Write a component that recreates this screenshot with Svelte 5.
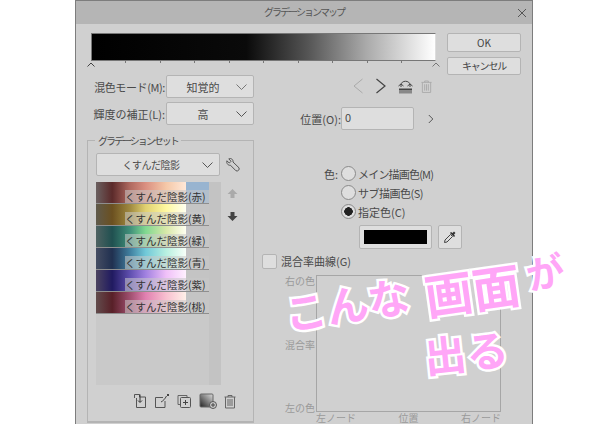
<script>
  const sets = [
    { name: 'くすんだ陰影(赤)', cls: 'red' },
    { name: 'くすんだ陰影(黄)', cls: 'yellow' },
    { name: 'くすんだ陰影(緑)', cls: 'green' },
    { name: 'くすんだ陰影(青)', cls: 'blue' },
    { name: 'くすんだ陰影(紫)', cls: 'purple' },
    { name: 'くすんだ陰影(桃)', cls: 'peach' }
  ];
  const ticks = [1, 2, 3, 4, 5, 6, 7, 8, 9];
</script>

<div class="dialog">
  <div class="titlebar">
    <span>グラデーションマップ</span>
    <svg class="close" width="10" height="10" viewBox="0 0 10 10"><path d="M1 1l8 8M9 1l-8 8" stroke="#555" fill="none" /></svg>
  </div>

  <div class="top">
    <div class="barwrap">
      <div class="bar"></div>
      <div class="ticks">
        {#each ticks as t}
          <i></i>
        {/each}
      </div>
      <svg class="caret start" width="8" height="5" viewBox="0 0 8 5"><path d="M.5 4.500L4 1l3.500 3.500" stroke="#444" fill="none" /></svg>
      <svg class="caret end" width="8" height="5" viewBox="0 0 8 5"><path d="M.5 4.500L4 1l3.500 3.500" stroke="#777" fill="none" /></svg>
    </div>
    <div class="buttons">
      <button>OK</button>
      <button class="cancel">キャンセル</button>
    </div>
  </div>

  <div class="columns">
    <div class="col-left">
      <div class="field">
        <span class="label tight">混色モード(M):</span>
        <div class="select">知覚的<svg width="11" height="6" viewBox="0 0 11 6"><path d="M.5.500l5 5 5-5" stroke="#777" fill="none" /></svg></div>
      </div>
      <div class="field">
        <span class="label">輝度の補正(L):</span>
        <div class="select">高<svg width="11" height="6" viewBox="0 0 11 6"><path d="M.5.500l5 5 5-5" stroke="#555" fill="none" /></svg></div>
      </div>

      <div class="group">
        <span class="legend">グラデーションセット</span>
        <div class="setrow">
          <div class="select wide"><span class="settext">くすんだ陰影</span><svg width="11" height="6" viewBox="0 0 11 6"><path d="M.5.500l5 5 5-5" stroke="#555" fill="none" /></svg></div>
          <svg width="14" height="14" viewBox="0 0 14 14"><path d="M.8 2.800L3.300 5 5 3.300 2.800.8C5-.2 7.400 1.500 7 4L13 9.800C13.900 11.500 12 13.700 10 12.800L4.400 7.200C2.200 7.800.2 5.200.8 2.800Z" stroke="#555" fill="none" /></svg>
        </div>
        <div class="listrow">
          <div class="list">
            {#each sets as s}
              <div class="item {s.cls}">
                <div class="grad"></div>
                <span>{s.name}</span>
              </div>
            {/each}
          </div>
          <div class="arrows">
            <svg width="11" height="11" viewBox="0 0 11 11"><path d="M5.500 1L10.500 6H7.500V10H3.500V6H.5Z" fill="#aaa" /></svg>
            <svg width="11" height="11" viewBox="0 0 11 11"><path d="M5.500 10L10.500 5H7.500V1H3.500V5H.5Z" fill="#444" /></svg>
          </div>
        </div>
        <div class="tools">
          <svg width="14" height="16" viewBox="0 0 14 16"><path d="M1.500 5V1.500H6.500V4H12.500V14.500H3.500V5" stroke="#555" fill="none" /><path d="M7 1.500V9M5 7.500l2 2 2-2" stroke="#333" fill="none" /></svg>
          <svg width="16" height="16" viewBox="0 0 16 16"><path d="M9 4.500H1.500V14.500H11V8" stroke="#555" fill="none" /><path d="M7 9C9 8 11 6 12.500 3" stroke="#444" fill="none" /><path d="M13 1h2v2h-2z" fill="#444" /></svg>
          <svg width="15" height="15" viewBox="0 0 15 15"><path d="M3 10.500H1V1.500H10V3.500" stroke="#666" fill="none" /><rect x="3.500" y="3.500" width="10" height="10" rx="1" stroke="#555" fill="none" /><path d="M8.500 6v5M6 8.500h5" stroke="#444" fill="none" /></svg>
          <svg width="18" height="16" viewBox="0 0 18 16">
            <defs><linearGradient id="tool" x1="0" y1="1" x2="1" y2="0"><stop offset="0" stop-color="#222" /><stop offset="1" stop-color="#ddd" /></linearGradient></defs>
            <rect x="1" y="1" width="13" height="13" rx="1" fill="url(#tool)" stroke="#666" />
            <circle cx="14" cy="12" r="3.500" fill="#ccc" stroke="#555" />
            <path d="M12 12h4M14 10v4" stroke="#444" />
          </svg>
          <svg width="12" height="15" viewBox="0 0 12 15"><path d="M.5 3h11M4 3V1.500h4V3M1.500 3V14H10.500V3M4 5v7M6 5v7M8 5v7" stroke="#666" fill="none" /></svg>
        </div>
      </div>
    </div>

    <div class="col-right">
      <div class="nav">
        <svg width="12" height="16" viewBox="0 0 12 16"><path d="M10.500 1L2 8l8.500 7" stroke="#aaa" fill="none" /></svg>
        <svg width="12" height="16" viewBox="0 0 12 16"><path d="M1.500 1L10 8l-8.500 7" stroke="#444" stroke-width="1.200" fill="none" /></svg>
        <svg width="15" height="15" viewBox="0 0 15 15"><path d="M3 8V6C3 1 12 1 12 6V8" stroke="#444" fill="none" /><path d="M.5 7l2.500-2 2.500 2M9.500 7L12 5l2.500 2" stroke="#444" fill="none" /><path d="M1 9.500h13v2H1z" fill="#444" /><path d="M1 12h13v2.500H1z" fill="#888" /></svg>
        <svg class="trash" width="11" height="15" viewBox="0 0 12 15"><path d="M.5 3h11M4 3V1.500h4V3M1.500 3V14H10.500V3M4 5v7M6 5v7M8 5v7" stroke="#aaa" fill="none" /></svg>
      </div>

      <div class="position">
        <span>位置(O):</span>
        <div class="input">0</div>
        <svg width="6" height="10" viewBox="0 0 6 10"><path d="M.8 1l4 4-4 4" stroke="#555" fill="none" /></svg>
      </div>

      <div class="colors">
        <div class="radio-row">
          <span class="colorlabel">色:</span>
          <i class="radio"></i>
          <span class="main">メイン描画色(M)</span>
        </div>
        <div class="radio-row">
          <i class="radio"></i>
          <span class="sub">サブ描画色(S)</span>
        </div>
        <div class="radio-row">
          <i class="radio on"></i>
          <span>指定色(C)</span>
        </div>
        <div class="swatchrow">
          <div class="swatch"><div></div></div>
          <div class="dropper">
            <svg width="14" height="14" viewBox="0 0 14 14"><path d="M1.500 12.500L2 10 7.500 4.500 9.500 6.500 4 12Z" stroke="#444" fill="none" /><path d="M7 3l1-1 1.500 1L11 1.500 12.500 3 11 4.500 12 6l-1 1Z" fill="#333" /></svg>
          </div>
        </div>
      </div>

      <div class="check">
        <i></i>
        <span>混合率曲線(G)</span>
      </div>

      <div class="graph">
        <div class="ylabels">
          <span>右の色</span>
          <span>混合率</span>
          <span>左の色</span>
        </div>
        <div class="plot">
          <div class="box"></div>
          <div class="xlabels">
            <span>左ノード</span>
            <span>位置</span>
            <span>右ノード</span>
          </div>
        </div>
      </div>
    </div>
  </div>
</div>

<div class="scribble">
  <span class="w1">こんな</span>
  <span class="w2">画面</span>
  <span class="w3">が</span>
  <span class="w4">出る</span>
</div>

<style>
  :global(body) {
    margin: 0;
    background: #fff;
    overflow: hidden;
  }

  .dialog {
    box-sizing: border-box;
    width: 458px;
    height: 424px;
    margin-left: 75px;
    background: #d0d0d0;
    border: 1px solid #7d7d7d;
    border-bottom: 0;
    font-family: "Noto Sans CJK JP", "Liberation Sans", sans-serif;
    font-size: 11px;
    color: #4a4a4a;
    overflow: hidden;
  }

  .titlebar {
    position: relative;
    height: 23px;
    line-height: 22px;
    background: #b5b5b5;
    text-align: center;
    font-size: 10px;
    letter-spacing: -2px;
    color: #555;
  }

  .close {
    position: absolute;
    right: 5px;
    top: 7px;
  }

  .top {
    display: flex;
    height: 51px;
    padding: 9px 0 0 15px;
    box-sizing: border-box;
    gap: 11px;
  }

  .barwrap {
    position: relative;
    width: 345px;
  }

  .bar {
    box-sizing: border-box;
    height: 28px;
    border: 1px solid #777;
    border-right-color: #ddd;
    background: linear-gradient(to right, #000 0%, #0a0a0a 45%, #555 63%, #aaa 80%, #fff 100%);
  }

  .ticks {
    display: flex;
    justify-content: space-between;
    padding: 0 34px;
  }

  .ticks i {
    width: 1px;
    height: 2px;
    background: #777;
  }

  .caret {
    position: absolute;
    top: 29px;
  }

  .caret.start {
    left: -4px;
  }

  .caret.end {
    right: -4px;
  }

  .buttons {
    display: flex;
    flex-direction: column;
    gap: 5px;
    z-index: 1;
  }

  button {
    box-sizing: border-box;
    width: 74px;
    height: 23px;
    padding: 0;
    font: inherit;
    font-size: 10px;
    color: #444;
    background: #dedede;
    border: 1px solid #b4b4b4;
    border-radius: 2px;
  }

  .cancel {
    letter-spacing: -1.200px;
  }

  .columns {
    display: flex;
    height: 349px;
  }

  .col-left {
    box-sizing: border-box;
    width: 178px;
    padding-left: 11px;
    flex: none;
  }

  .field {
    display: flex;
    align-items: center;
    justify-content: flex-end;
    height: 23px;
    margin-bottom: 4px;
  }

  .label {
    margin-right: 1px;
    white-space: nowrap;
  }

  .tight {
    letter-spacing: -0.400px;
  }

  .select {
    position: relative;
    box-sizing: border-box;
    display: flex;
    align-items: center;
    justify-content: center;
    width: 88px;
    height: 23px;
    padding-right: 14px;
    background: #dedede;
    border: 1px solid #b4b4b4;
    border-radius: 2px;
  }

  .select svg {
    position: absolute;
    right: 6px;
    top: 8px;
  }

  .select.wide {
    width: 124px;
  }

  .settext {
    font-size: 10px;
    letter-spacing: -0.500px;
  }

  .group {
    position: relative;
    box-sizing: border-box;
    width: 167px;
    height: 283px;
    margin-top: 15px;
    padding: 12px 0 0 8px;
    border: 1px solid #b4b4b4;
    border-bottom-width: 2px;
  }

  .legend {
    position: absolute;
    top: -8px;
    left: 7px;
    padding: 0 3px;
    line-height: 15px;
    font-size: 10px;
    letter-spacing: -2px;
    background: #d0d0d0;
  }

  .setrow {
    display: flex;
    align-items: center;
    gap: 6px;
  }

  .listrow {
    display: flex;
    gap: 6px;
    margin-top: 6px;
  }

  .list {
    box-sizing: border-box;
    width: 125px;
    height: 203px;
    padding-right: 12px;
    background: linear-gradient(to right, #c9c9c9 113px, #c3c3c3 113px);
  }

  .item {
    position: relative;
    box-sizing: border-box;
    height: 22px;
    border-bottom: 1px solid #8e8e8e;
    background: #c4c4c4;
  }

  .item.red {
    background: #98b4d0;
  }

  .grad {
    width: 90px;
    height: 100%;
  }

  .red .grad {
    background: linear-gradient(to right, #6a6060, #5b2a2a 18%, #b06a60 38%, #da8f80 55%, #f5c8a8 78%, #ffe8d8);
  }

  .yellow .grad {
    background: linear-gradient(to right, #5f5a4c, #6b5020 18%, #a08a40 38%, #e0d070 55%, #fff8a0 78%, #fffff0);
  }

  .green .grad {
    background: linear-gradient(to right, #4f6262, #205050 18%, #40907a 38%, #80d890 55%, #d8e8a8 78%, #fffff0);
  }

  .blue .grad {
    background: linear-gradient(to right, #454d62, #203050 18%, #4080a0 38%, #70c8d8 55%, #b8f0e0 78%, #f8fff8);
  }

  .purple .grad {
    background: linear-gradient(to right, #4c4460, #201a60 18%, #6050b0 38%, #a080e0 55%, #f0c0f8 78%, #fff0ff);
  }

  .peach .grad {
    background: linear-gradient(to right, #624c4c, #582028 18%, #a05070 38%, #e080b0 55%, #f8c0d0 78%, #fff0e8);
  }

  .item span {
    position: absolute;
    right: 0;
    bottom: 0;
    width: 84px;
    height: 13px;
    line-height: 13px;
    font-size: 10.500px;
    white-space: nowrap;
    color: #333;
    background: rgba(200, 200, 200, 0.55);
  }

  .arrows {
    display: flex;
    flex-direction: column;
    gap: 12px;
    padding-top: 6px;
  }

  .tools {
    display: flex;
    align-items: center;
    gap: 7px;
    margin: 8px 0 0 37px;
  }

  .col-right {
    flex: 1;
    padding-left: 8px;
  }

  .nav {
    display: flex;
    align-items: center;
    gap: 11px;
    height: 16px;
    margin: 3px 0 0 90px;
  }

  .trash {
    margin-left: -3px;
  }

  .position {
    display: flex;
    align-items: center;
    margin: 13px 0 0 25px;
  }

  .position span {
    width: 54px;
    text-align: right;
  }

  .input {
    box-sizing: border-box;
    width: 73px;
    height: 23px;
    margin-right: 14px;
    padding-left: 3px;
    line-height: 19px;
    background: #dedede;
    border: 1px solid #b4b4b4;
    border-radius: 2px;
  }

  .colors {
    margin: 34px 0 0 79px;
  }

  .radio-row {
    position: relative;
    display: flex;
    align-items: center;
    gap: 2px;
    height: 19px;
  }

  .main {
    letter-spacing: -0.800px;
  }

  .sub {
    letter-spacing: -0.500px;
  }

  .colorlabel {
    position: absolute;
    left: -17px;
  }

  .radio {
    box-sizing: border-box;
    width: 15px;
    height: 15px;
    border: 1px solid #8a8a8a;
    border-radius: 50%;
    background: #dedede;
  }

  .radio.on {
    background: radial-gradient(circle, #222 4px, #dedede 4.500px);
  }

  .swatchrow {
    display: flex;
    gap: 6px;
    margin: 4px 0 0 18px;
  }

  .swatch {
    box-sizing: border-box;
    width: 73px;
    height: 24px;
    padding: 4px;
    background: #dedede;
    border: 1px solid #b4b4b4;
    border-radius: 2px;
  }

  .swatch div {
    height: 100%;
    background: #000;
  }

  .dropper {
    box-sizing: border-box;
    display: flex;
    align-items: center;
    justify-content: center;
    width: 24px;
    height: 24px;
    background: #dedede;
    border: 1px solid #b4b4b4;
    border-radius: 2px;
  }

  .check {
    display: flex;
    align-items: center;
    gap: 4px;
    margin-top: 4px;
  }

  .check i {
    box-sizing: border-box;
    width: 15px;
    height: 15px;
    background: #dedede;
    border: 1px solid #b4b4b4;
    border-radius: 2px;
  }

  .graph {
    display: flex;
    margin-top: 6px;
    color: #9a9a9a;
    font-size: 10px;
    line-height: 12px;
  }

  .ylabels {
    display: flex;
    flex-direction: column;
    justify-content: space-between;
    align-items: flex-end;
    box-sizing: border-box;
    width: 54px;
    height: 139px;
    padding-right: 1px;
  }

  .box {
    box-sizing: border-box;
    width: 185px;
    height: 137px;
    border: 1px solid #a6a6a6;
  }

  .xlabels {
    display: flex;
    justify-content: space-between;
  }

  .scribble {
    position: absolute;
    inset: 0;
    font-family: "Noto Sans CJK JP", sans-serif;
    font-weight: 700;
    color: #ffa6f7;
    -webkit-text-stroke: 5px #fff;
    paint-order: stroke fill;
  }

  .scribble span {
    position: absolute;
    white-space: nowrap;
    line-height: 1;
  }

  .w1 {
    left: 284px;
    top: 282px;
    font-size: 42px;
    transform: rotate(-9deg);
  }

  .w2 {
    left: 424px;
    top: 264px;
    font-size: 48px;
    transform: rotate(-8deg);
  }

  .w3 {
    left: 526px;
    top: 252px;
    font-size: 38px;
    transform: rotate(-12deg);
  }

  .w4 {
    left: 424px;
    top: 330px;
    font-size: 42px;
    transform: rotate(-6deg);
  }
</style>
